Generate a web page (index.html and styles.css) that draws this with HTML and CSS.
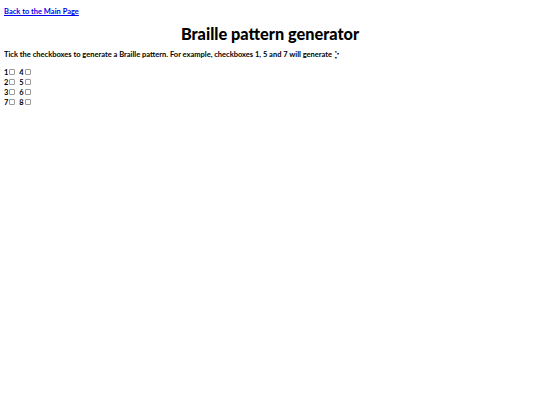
FILE: index.html
```html
<!DOCTYPE html>
<html>
<head>
<meta charset="utf-8">
<link rel="stylesheet" href="styles.css">
</head>
<body>
<a class="back" href="#">Back to the Main Page</a>
<h1 class="title">Braille pattern generator</h1>
<p class="intro">Tick the checkboxes to generate a Braille pattern. For example, checkboxes 1, 5 and 7 will generate <span class="braille">⡑</span></p>
<div class="grid">
  <div class="row"><label>1<input type="checkbox"></label> <label>4<input type="checkbox"></label></div>
  <div class="row"><label>2<input type="checkbox"></label> <label>5<input type="checkbox"></label></div>
  <div class="row"><label>3<input type="checkbox"></label> <label>6<input type="checkbox"></label></div>
  <div class="row"><label>7<input type="checkbox"></label> <label>8<input type="checkbox"></label></div>
</div>
</body>
</html>
```
FILE: styles.css
```css
body {
  margin: 4px;
  font-family: "Lato", sans-serif;
  font-size: 7.5px;
  font-weight: 700;
  color: #000;
  background: #fff;
}
.back {
  display: block;
  margin-top: 4px;
  line-height: 8px;
  color: #0000ee;
  text-decoration: underline;
}
.title {
  text-align: center;
  font-size: 16.3px;
  font-weight: 900;
  margin: 8px 0 0;
  line-height: 20px;
}
.intro {
  margin: 6px 0 0;
  line-height: 10px;
}
.braille {
  font-family: "DejaVu Sans", sans-serif;
}
.grid {
  margin-top: 7px;
}
.row {
  display: flex;
  gap: 4px;
  height: 10px;
  align-items: center;
}
.row label {
  display: flex;
  align-items: center;
}
.row input {
  appearance: none;
  -webkit-appearance: none;
  box-sizing: border-box;
  width: 6px;
  height: 6px;
  margin: 0 0 0 1px;
  border: 1px solid #9a9a9a;
  border-radius: 1px;
  background: #fff;
}
```
